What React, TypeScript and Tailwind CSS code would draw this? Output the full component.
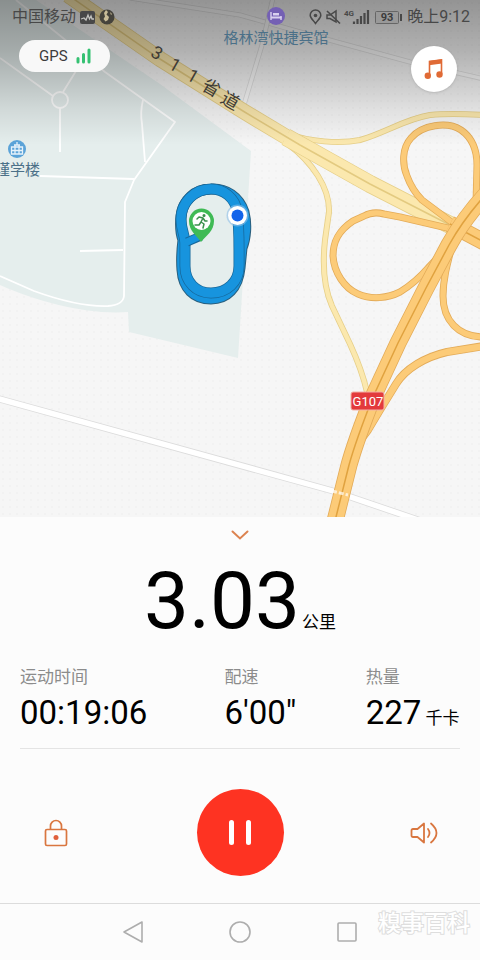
import type { ReactNode } from "react";

const YELLOW = "#fbe8ae";
const YELLOW_EDGE = "#e6cf88";
const ORANGE = "#fccb78";
const ORANGE_EDGE = "#e3ab58";

function Road({ d, w, fill, edge }: { d: string; w: number; fill: string; edge: string }) {
  return (
    <g fill="none" strokeLinejoin="round">
      <path d={d} stroke={edge} strokeWidth={w} />
      <path d={d} stroke={fill} strokeWidth={w - 1.6} />
    </g>
  );
}

const LAP =
  "M211 189 C224 189 235 198 237 211 C239 224 239 238 239 250 L239 266 C239 282 227 293 211 293 C196 293 185 282 185 266 L185 243 C185 235 181 230 181 219 C181 203 194 189 211 189 Z";
const OUTER_LAP =
  "M211 189 C226 188 239 197 244 212 C247 224 246 238 242 248 L240 268 C238 288 227 299 211 299 C194 299 183 288 182 270 C181 258 182 248 183 240 C180 232 180 226 181 216 C183 200 195 189 211 189 Z";

function MapCanvas() {
  return (
    <svg
      className="absolute inset-0 h-full w-full"
      viewBox="0 0 480 517"
      preserveAspectRatio="xMidYMid slice"
      role="img"
      aria-label="跑步轨迹地图"
    >
      <defs>
        <pattern id="dots" width="7" height="7" patternUnits="userSpaceOnUse">
          <rect width="7" height="7" fill="#f6f6f6" />
          <circle cx="3" cy="3" r="1" fill="#f1f1f1" />
        </pattern>
        <linearGradient id="shade" x1="0" y1="0" x2="0" y2="1">
          <stop offset="0" stopColor="#000" stopOpacity="0.4" />
          <stop offset="0.35" stopColor="#000" stopOpacity="0.28" />
          <stop offset="0.75" stopColor="#000" stopOpacity="0.09" />
          <stop offset="1" stopColor="#000" stopOpacity="0" />
        </linearGradient>
      </defs>
      <rect width="480" height="517" fill="url(#dots)" />

      {/* campus */}
      <path
        d="M0 0 L36 0 L160 84 L251 151 L238 358 L129 332 L128 312 C90 315 40 303 0 285 Z"
        fill="#e5eeed"
      />
      <g fill="none" stroke="#fff" strokeWidth="1.8" strokeLinejoin="round">
        <path d="M16 0 L105 72 L175 122 L134 180 L125 202 L124 296 Q123 305 108 306 Q78 307 34 291 L0 276" />
        <path d="M0 58 L53 96 M63 92 L76 71 M60 108 V152" />
        <circle cx="60" cy="100" r="8" />
        <path d="M143 100 Q140 112 142 124 L145 162 M40 176 L134 179 M80 251 L123 250" />
      </g>

      {/* minor roads */}
      <Road d="M130 -2 L240 15 L300 32 L410 62 L484 79" w={5} fill="#fafafa" edge="#dedede" />
      <Road d="M273 -2 L262 45 L243 108" w={5} fill="#fafafa" edge="#dedede" />
      <Road d="M-4 398 L333 491 L424 522" w={7} fill="#fff" edge="#dcdcdc" />

      {/* provincial road and its ramps */}
      <Road
        d="M285 133 C310 142 340 144 360 140 C385 133 405 119 430 115 Q450 113 484 115"
        w={6}
        fill={YELLOW}
        edge={YELLOW_EDGE}
      />
      <Road
        d="M288 144 C312 162 330 188 329 212 L325 240 C322 268 324 288 332 306 L350 344 Q362 370 367 392"
        w={6}
        fill={YELLOW}
        edge={YELLOW_EDGE}
      />
      <Road d="M68 -5 L160 59 L243 111 L293 141" w={16} fill={YELLOW} edge={YELLOW_EDGE} />
      <Road d="M286 137 L370 184 L452 226" w={18} fill={YELLOW} edge={YELLOW_EDGE} />
      <path d="M284 130 L300 140 L300 151 L284 141 Z" fill={YELLOW} />
      <path d="M68 -5 L160 59 L243 111 L300 145 L370 184 L452 226" fill="none" stroke="#e3ca80" strokeWidth="1.5" />

      {/* interchange loops */}
      <Road
        d="M454 224 L422 200 Q412 190 407 176 C402 164 402 148 411 138 C422 125 447 121 461 130 C474 139 477 152 477 165 L476 204"
        w={7}
        fill={ORANGE}
        edge={ORANGE_EDGE}
      />
      <Road
        d="M456 230 L400 217 L384 214 Q373 211 364 216 L353 221 C338 231 333 242 333 256 C334 272 344 288 358 294 C372 300 388 298 400 292 Q416 282 428 268 L444 251"
        w={7}
        fill={ORANGE}
        edge={ORANGE_EDGE}
      />
      <Road d="M452 246 C447 265 443 280 443 296 C443 320 458 337 484 337" w={7} fill={ORANGE} edge={ORANGE_EDGE} />
      <Road d="M484 346 L447 352 C425 357 405 369 396 384 L380 410 L368 430 L356 446" w={8} fill={ORANGE} edge={ORANGE_EDGE} />
      <Road d="M450 224 L486 243" w={17} fill={ORANGE} edge={ORANGE_EDGE} />
      <path d="M450 224 L486 243" stroke="#e0a23f" strokeWidth="1.5" />
      <Road d="M488 192 Q464 218 449 245 L426 288 L398 343 L373 397 Q356 440 349 465 L335 521" w={17} fill={ORANGE} edge={ORANGE_EDGE} />
      <path
        d="M488 192 Q464 218 449 245 L426 288 L398 343 L373 397 Q356 440 349 465 L335 521"
        fill="none"
        stroke="#e0a23f"
        strokeWidth="1.5"
      />
      <path d="M332 491 L348 495" stroke="#fff" strokeWidth="3" strokeDasharray="5 2" opacity="0.7" />

      <rect x="351" y="392" width="33" height="18" rx="2" fill="#e33a3c" stroke="#f3b2a6" />
      <text x="368" y="406" fontSize="13" textAnchor="middle" fill="#fff" fontFamily="Roboto, sans-serif">
        G107
      </text>

      <rect width="480" height="145" fill="url(#shade)" />

      {/* road name */}
      <g fontSize="18" fill="#3f3c36" fontFamily="Roboto, 'Noto Sans CJK SC', sans-serif" textAnchor="middle">
        <text transform="translate(157 53) rotate(30)" y="6">3</text>
        <text transform="translate(175 65) rotate(30)" y="6">1</text>
        <text transform="translate(193 76) rotate(30)" y="6">1</text>
        <text transform="translate(211 88) rotate(30)" y="6">省</text>
        <text transform="translate(230 101) rotate(30)" y="6">道</text>
      </g>

      {/* places */}
      <g fontSize="15" fill="#4b7088" fontFamily="'Noto Sans CJK SC', sans-serif">
        <text x="276" y="43" textAnchor="middle">格林湾快捷宾馆</text>
        <text x="40" y="175" textAnchor="end">瑾学楼</text>
      </g>
      <circle cx="276" cy="16" r="9" fill="#7460b4" />
      <path d="M271 12 V20 M281 16 V20" fill="none" stroke="#d9d0ef" strokeWidth="1.4" />
      <path d="M271 16.500 H281.500 V18.500 H271 Z M273 13 H279 V15.500 H273 Z" fill="#d9d0ef" />
      <circle cx="17" cy="149" r="9" fill="#5ba3d8" />
      <path d="M11.500 147 H22.500 V154 H11.500 Z M11.500 150.500 H22.500 M15 145 V154 M19 145 V154 M17 142 V145 M14 145 H20" fill="none" stroke="#e6f2fa" strokeWidth="1.3" />

      {/* track */}
      <g fill="none" strokeLinejoin="round">
        <path d={OUTER_LAP} stroke="#2a5f7d" strokeWidth="11" />
        <path d={OUTER_LAP} stroke="#1794de" strokeWidth="9" />
        <path d={LAP} stroke="#17689b" strokeWidth="11" />
        <path d={LAP} stroke="#1794de" strokeWidth="9.500" />
        <path d="M187 242 L201 236" stroke="#17689b" strokeWidth="9" />
        <path d="M185 243 L200 236" stroke="#1794de" strokeWidth="7" />
      </g>
      <path d="M201 242 C197 236 189 231 189 221 A12.500 12.500 0 0 1 214 221 C214 231 206 236 201 242 Z" fill="#3fba55" />
      <circle cx="201.500" cy="221" r="9" fill="#fff" />
      <g fill="none" stroke="#3a8f4c" strokeWidth="1.500" strokeLinecap="round" strokeLinejoin="round">
        <path d="M197 219 L199 217 L203 218 L201 222 L204 224 L203 228 M201 222 L199 225 L195 225 M203 218 L205 221 L207 221" />
        <circle cx="204" cy="215.500" r="0.800" />
      </g>
      <circle cx="237.500" cy="215.500" r="11" fill="#8fbfe8" opacity="0.6" />
      <circle cx="237.500" cy="215.500" r="9.500" fill="#fff" />
      <circle cx="237.500" cy="215.500" r="6" fill="#1264ea" />
    </svg>
  );
}

function StatusBar() {
  return (
    <header className="relative flex h-8 items-end justify-between pl-3 pr-2.5 text-base leading-[30px] text-[#484848]">
      <div className="flex items-center gap-1">
        <span>中国移动</span>
        <svg width="15" height="13" viewBox="0 0 15 13">
          <rect width="15" height="13" rx="2" fill="#484848" />
          <path d="M1 8 L4 7 L6 9 L8 4 L9.500 8 L11 5 L12 8 H14" fill="none" stroke="#c4c4c0" strokeWidth="1.300" />
        </svg>
        <svg width="16" height="16" viewBox="0 0 16 16">
          <circle cx="8" cy="8" r="7.500" fill="#45433c" />
          <path d="M7 1 L9 3 L7.500 5.500 L10 8 L9 11 L6.500 12.500 L4.500 10 L6 7.500 L5 4 Z" fill="#c8bc98" />
          <path d="M11 3 L13 5 L12 6 Z" fill="#c8bc98" />
        </svg>
      </div>
      <div className="flex items-center">
        <svg width="98" height="16" viewBox="0 0 98 16" aria-label="电池 93%">
          <path d="M6.500 14.500 C4 11 1.200 9 1.200 6.200 A5.300 5.300 0 0 1 11.800 6.200 C11.800 9 9 11 6.500 14.500 Z" fill="none" stroke="#484848" strokeWidth="1.500" />
          <circle cx="6.500" cy="6.500" r="1.800" fill="#484848" />
          <path d="M18 6 H21 L27 2 V13 L21 9.500 H18 Z" fill="none" stroke="#484848" strokeWidth="1.500" />
          <path d="M18 2 L31 14.500" stroke="#484848" strokeWidth="1.600" />
          <text x="35" y="7" fontSize="8" fontWeight="700" fill="#484848" fontFamily="Roboto, sans-serif">4G</text>
          <path d="M45 15 V12.500 M48.500 15 V10 M52 15 V7 M55.500 15 V4 M59 15 V1" stroke="#484848" strokeWidth="2.200" />
          <rect x="66.500" y="2.500" width="23" height="12" rx="1" fill="#999" stroke="#666" />
          <text x="78" y="12" fontSize="11" fontWeight="700" textAnchor="middle" fill="#3c3c3c" fontFamily="Roboto, sans-serif">93</text>
          <path d="M92 5 V12" stroke="#484848" strokeWidth="2" />
        </svg>
        <time>晚上9:12</time>
      </div>
    </header>
  );
}

function Stat({ label, value, unit }: { label: string; value: string; unit?: string }) {
  return (
    <div className="whitespace-nowrap">
      <dt className="text-[17px] leading-6 text-[#8c8c8c]">{label}</dt>
      <dd className="mt-1 flex items-baseline gap-1 text-[33px] leading-10 text-black">
        {value}
        {unit && <span className="text-[17px]">{unit}</span>}
      </dd>
    </div>
  );
}

function IconButton({ label, children }: { label: string; children: ReactNode }) {
  return (
    <button type="button" aria-label={label} className="flex size-10 items-center justify-center text-[#d9763f]">
      {children}
    </button>
  );
}

export default function App() {
  return (
    <div className="flex min-h-screen flex-col bg-[#fcfcfc] font-[Roboto,'Noto_Sans_CJK_SC',sans-serif]">
      <section className="relative flex-1 overflow-hidden">
        <MapCanvas />
        <StatusBar />
        <div className="relative flex items-start justify-between pl-[19px] pr-[23px] pt-2">
          <div className="flex h-8 items-center gap-2 rounded-full bg-[#f8f8f8] pl-5 pr-[19px] text-[15px] text-[#3c3c3c]">
            GPS
            <svg width="15" height="16" viewBox="0 0 15 16">
              <path d="M2 10.500 V14 M7.500 6.500 V14 M13 2 V14" stroke="#35c172" strokeWidth="3" strokeLinecap="round" />
            </svg>
          </div>
          <button
            type="button"
            aria-label="音乐"
            className="mt-1.5 flex size-[46px] items-center justify-center rounded-full bg-white shadow-sm"
          >
            <svg width="20" height="22" viewBox="0 0 20 22" className="text-[#e06a35]">
              <path d="M5.500 17.500 V3.500 L17.500 2 V16" fill="none" stroke="currentColor" strokeWidth="1.600" />
              <path d="M5 3 L18 1.200 V5.500 L5 7.200 Z" fill="currentColor" />
              <circle cx="3.800" cy="17.800" r="3.200" fill="currentColor" />
              <circle cx="15.500" cy="16.500" r="3.200" fill="currentColor" />
            </svg>
          </button>
        </div>
      </section>

      <main className="px-5">
        <button type="button" aria-label="收起" className="mx-auto flex h-9 w-12 items-center justify-center">
          <svg width="18" height="10" viewBox="0 0 18 10">
            <path d="M1.500 1.500 L9 8.500 L16.500 1.500" fill="none" stroke="#dc8350" strokeWidth="2" strokeLinecap="round" />
          </svg>
        </button>
        <p className="flex h-[112px] items-baseline justify-center gap-0.5 text-[80px] leading-[96px] text-black">
          3.03<span className="text-[17px]">公里</span>
        </p>
        <dl className="grid grid-cols-[204fr_141fr_94fr] border-b border-[#e4e4e4] pb-2.5">
          <Stat label="运动时间" value="00:19:06" />
          <Stat label="配速" value={"6'00\""} />
          <Stat label="热量" value="227" unit="千卡" />
        </dl>
        <div className="flex items-center justify-between px-4 pb-[27px] pt-10">
          <IconButton label="锁定">
            <svg width="24" height="28" viewBox="0 0 24 28" fill="none" stroke="currentColor" strokeWidth="1.700">
              <rect x="1.500" y="10.500" width="21" height="16" rx="1.500" />
              <path d="M6.500 10.500 V7 A5.500 5.500 0 0 1 17.500 7 V10.500" />
              <circle cx="12" cy="18.500" r="2.500" fill="#e0603c" stroke="none" />
            </svg>
          </IconButton>
          <button type="button" aria-label="暂停" className="flex size-[87px] items-center justify-center gap-3 rounded-full bg-[#fe3322]">
            <span className="h-[25px] w-[5px] rounded-sm bg-white" />
            <span className="h-[25px] w-[5px] rounded-sm bg-white" />
          </button>
          <IconButton label="声音">
            <svg width="28" height="24" viewBox="0 0 28 24" fill="none" stroke="currentColor" strokeWidth="1.800" strokeLinejoin="round" strokeLinecap="round">
              <path d="M14 2.500 V21.500 L7.500 16 H3 Q1.500 16 1.500 14.500 V9.500 Q1.500 8 3 8 H7.500 Z" />
              <path d="M18 8 Q21 12 18 16 M21 2.500 Q32 12 21 21.500" />
            </svg>
          </IconButton>
        </div>
      </main>

      <nav className="relative flex h-[57px] items-center justify-center gap-[86px] border-t border-[#dcdcdc] text-[#adadad]">
        <button type="button" aria-label="返回">
          <svg width="20" height="22" viewBox="0 0 20 22" fill="none" stroke="currentColor" strokeWidth="1.600" strokeLinejoin="round">
            <path d="M19 1 V21 L1 11 Z" />
          </svg>
        </button>
        <button type="button" aria-label="主页">
          <svg width="22" height="22" viewBox="0 0 22 22" fill="none" stroke="currentColor" strokeWidth="1.600">
            <circle cx="11" cy="11" r="10" />
          </svg>
        </button>
        <button type="button" aria-label="最近任务">
          <svg width="20" height="20" viewBox="0 0 20 20" fill="none" stroke="currentColor" strokeWidth="1.600">
            <rect x="1" y="1" width="18" height="18" rx="1" />
          </svg>
        </button>
        <span className="absolute right-2.5 top-0 text-[23px] font-medium leading-10 text-white [-webkit-text-stroke:2px_#dedede] [paint-order:stroke_fill]">
          糗事百科
        </span>
      </nav>
    </div>
  );
}
